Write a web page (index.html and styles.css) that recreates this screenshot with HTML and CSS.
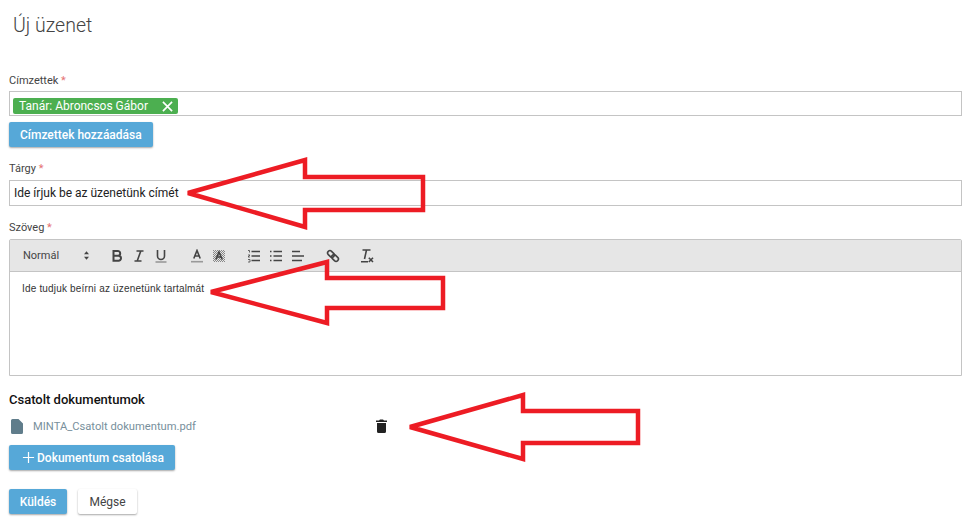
FILE: index.html
```html
<!DOCTYPE html>
<html lang="hu">
<head>
    <meta charset="UTF-8">
    <meta name="viewport" content="width=device-width, initial-scale=1.0">
    <title>Új üzenet</title>
    <link rel="stylesheet" href="styles.css">
</head>
<body>
    <h1 class="page-title">Új üzenet</h1>

    <main class="message-form">
        <!-- Recipients -->
        <div class="field field-recipients">
            <label class="field-label">Címzettek <span class="required">*</span></label>
            <div class="chip-input">
                <span class="chip">Tanár: Abroncsos Gábor
                    <svg class="chip-close" viewBox="0 0 12 12"><path d="M1 1l10 10M11 1L1 11"/></svg>
                </span>
            </div>
            <button class="btn btn-primary btn-recipients">Címzettek hozzáadása</button>
        </div>

        <!-- Subject -->
        <div class="field field-subject">
            <label class="field-label">Tárgy <span class="required">*</span></label>
            <div class="text-input">Ide írjuk be az üzenetünk címét</div>
        </div>

        <!-- Body editor -->
        <div class="field field-body">
            <label class="field-label">Szöveg <span class="required">*</span></label>
            <div class="editor">
                <div class="toolbar">
                    <span class="format-select">Normál
                        <svg class="select-arrows" viewBox="0 0 6 10"><path d="M3 0l3 3.6H0zM3 10L0 6.4h6z"/></svg>
                    </span>
                    <span class="tool-group tool-group-text">
                        <svg class="tool tool-bold" viewBox="0 0 14 14"><path d="M3.500 2h4.300a2.400 2.400 0 0 1 0 4.800H3.500zM3.500 6.800h5a2.500 2.500 0 0 1 0 5h-5z"/></svg>
                        <svg class="tool" viewBox="0 0 14 14"><path d="M4.500 2h7M2.500 12h7M8.800 2L5.200 12"/></svg>
                        <svg class="tool" viewBox="0 0 14 14"><path d="M3.500 1v6a3.500 3.500 0 0 0 7 0V1"/><path class="tool-line" d="M1.500 13h11"/></svg>
                    </span>
                    <span class="tool-group tool-group-color">
                        <svg class="tool" viewBox="0 0 14 14"><path d="M3.800 9.500L7 1.500l3.200 8M5 7h4"/><path class="tool-line" d="M1 12.700h12"/></svg>
                        <svg class="tool" viewBox="0 0 14 14">
                            <defs>
                                <pattern id="dither" width="2" height="2" patternUnits="userSpaceOnUse">
                                    <rect class="tool-hatch" width="1" height="1"/>
                                    <rect class="tool-hatch" x="1" y="1" width="1" height="1"/>
                                </pattern>
                            </defs>
                            <rect class="tool-bg" fill="url(#dither)" x="1" y="1" width="12" height="12"/>
                            <path d="M3.800 10.500L7 3l3.200 7.500M5 8h4"/>
                        </svg>
                    </span>
                    <span class="tool-group tool-group-list">
                        <svg class="tool" viewBox="0 0 14 14"><path d="M4.500 2.500H13M4.500 7H13M4.500 11.500H13"/><path class="tool-thin" d="M1 1.500h1.500v2M1 6h2l-2 2h2M1 10.500h2v2.500H1"/></svg>
                        <svg class="tool" viewBox="0 0 14 14"><path d="M4.500 2.500H13M4.500 7H13M4.500 11.500H13M1 2.500h1.500M1 7h1.500M1 11.500h1.500"/></svg>
                        <svg class="tool" viewBox="0 0 14 14"><path d="M1 2.500h8M1 7h12M1 11.500h10"/></svg>
                    </span>
                    <svg class="tool tool-link" viewBox="0 0 14 14"><rect x="1.200" y="2.700" width="7.500" height="4.600" rx="2.300" transform="rotate(45 5 5)"/><rect x="5.300" y="6.700" width="7.500" height="4.600" rx="2.300" transform="rotate(45 9 9)"/></svg>
                    <svg class="tool tool-clear" viewBox="0 0 14 14"><path d="M2.500 1h8M6.500 1L4.500 10M1 12.700h7"/><path d="M8.800 8.800l4.200 4.200M13 8.800L8.800 13"/></svg>
                </div>
                <div class="editor-content">
                    <p>Ide tudjuk beírni az üzenetünk tartalmát</p>
                </div>
            </div>
        </div>

        <!-- Attachments -->
        <section class="attachments">
            <h2 class="attachments-title">Csatolt dokumentumok</h2>
            <div class="attachment-row">
                <svg class="file-icon" viewBox="0 0 12 15"><path d="M1.500 0H7.500L12 4.500V13.500A1.500 1.500 0 0 1 10.500 15H1.500A1.500 1.500 0 0 1 0 13.500V1.500A1.500 1.500 0 0 1 1.500 0z"/></svg>
                <span class="file-name">MINTA_Csatolt dokumentum.pdf</span>
                <svg class="trash-icon" viewBox="0 0 11 14"><path d="M0 1.500h3L4 .5h3l1 1h3V3H0zM1 4h9v8.500A1.500 1.500 0 0 1 8.500 14h-6A1.500 1.500 0 0 1 1 12.500z"/></svg>
            </div>
            <button class="btn btn-primary btn-attach">
                <svg class="plus-icon" viewBox="0 0 14 14"><path d="M7 1v12M1 7h12"/></svg>
                Dokumentum csatolása
            </button>
        </section>

        <div class="form-actions">
            <button class="btn btn-primary btn-send">Küldés</button>
            <button class="btn btn-default">Mégse</button>
        </div>
    </main>

    <!-- Red arrows drawn over the form -->
    <svg class="arrows" viewBox="0 0 976 523">
        <path d="M188 193L305 160V177H423V210H305V227Z"/>
        <path d="M211 292L327 262V278H443V308H327V323Z"/>
        <path d="M410 427L523 395V411H638V443H523V459Z"/>
    </svg>
</body>
</html>
```

FILE: styles.css
```css
/* Page */
body {
    font-family: Roboto, Arial, sans-serif;
    margin: 0;
    padding: 0;
    background-color: #fff;
    color: #222;
    position: relative;
    height: 523px;
    overflow: hidden;
}

.page-title {
    margin: 0;
    padding: 14px 0 0 13px;
    font-size: 19.500px;
    line-height: 24px;
    font-weight: 300;
    color: #444;
}

.message-form {
    padding: 36px 14px 0 9px;
}

/* Fields */
.field-label {
    display: block;
    font-size: 11px;
    line-height: 14px;
    color: #444;
    margin-bottom: 4px;
}

.field-recipients .field-label {
    margin-bottom: 3px;
}

.required {
    color: #e57373;
}

.chip-input {
    height: 25px;
    border: 1px solid #c4c4c4;
    padding: 3px;
    box-sizing: border-box;
}

.chip {
    display: inline-flex;
    align-items: center;
    justify-content: space-between;
    width: 165px;
    height: 16px;
    padding: 0 5px 0 6px;
    box-sizing: border-box;
    background-color: #4caf50;
    border-radius: 2px;
    color: #fff;
    font-size: 12px;
}

.chip-close {
    width: 11px;
    height: 11px;
    fill: none;
    stroke: #fff;
    stroke-width: 1.800;
}

.btn {
    font-family: inherit;
    font-size: 12px;
    font-weight: 500;
    height: 25px;
    padding: 0 11px;
    border: none;
    border-radius: 2px;
    box-shadow: 0 1px 2px rgba(0, 0, 0, 0.35);
    cursor: pointer;
}

.btn-primary {
    background-color: #56a8d8;
    color: #fff;
}

.btn-default {
    width: 59px;
    padding: 0;
    background-color: #fff;
    color: #444;
    font-weight: 400;
}

.btn-recipients {
    display: block;
    margin-top: 6px;
}

.field-subject {
    margin-top: 15px;
}

.text-input {
    height: 26px;
    line-height: 24px;
    box-sizing: border-box;
    border: 1px solid #c4c4c4;
    padding-left: 4px;
    font-size: 12px;
    color: #222;
}

.field-body {
    margin-top: 15px;
}

/* Editor */
.editor {
    border: 1px solid #c4c4c4;
    border-radius: 2px 2px 0 0;
}

.toolbar {
    display: flex;
    align-items: center;
    height: 31px;
    padding-left: 13px;
    background-color: #e6e6e6;
    border-bottom: 1px solid #c4c4c4;
}

.format-select {
    display: flex;
    align-items: center;
    justify-content: space-between;
    width: 66px;
    font-size: 11px;
    color: #444;
}

.select-arrows {
    width: 5px;
    height: 9px;
    fill: #444;
}

.tool-group {
    display: flex;
    gap: 8px;
}

.tool {
    width: 14px;
    height: 14px;
    fill: none;
    stroke: #444;
    stroke-width: 1.600;
    flex: none;
}

.tool-bold {
    stroke-width: 2;
}

.tool-line {
    stroke: #999;
}

.tool-thin {
    stroke-width: 0.800;
}

.tool-hatch {
    fill: #888;
    stroke: none;
}

.tool-bg {
    stroke: none;
}

.tool-group-text {
    margin-left: 21px;
}

.tool-group-color {
    margin-left: 22px;
}

.tool-group-list {
    margin-left: 21px;
}

.tool-link {
    margin-left: 21px;
}

.tool-clear {
    margin-left: 20px;
}

.editor-content {
    height: 103px;
    padding: 11px 12px;
    box-sizing: border-box;
    font-family: "Liberation Sans", Arial, sans-serif;
    font-size: 10px;
    letter-spacing: 0.180px;
    color: #333;
}

.editor-content p {
    margin: 0;
}

/* Attachments */
.attachments {
    margin-top: 16px;
}

.attachments-title {
    margin: 0;
    font-size: 13px;
    line-height: 16px;
    font-weight: 500;
    color: #111;
}

.attachment-row {
    display: flex;
    align-items: center;
    height: 20px;
    margin-top: 8px;
    padding-left: 2px;
}

.file-icon {
    width: 12px;
    height: 15px;
    fill: #607d8b;
}

.file-name {
    margin-left: 10px;
    width: 343px;
    font-size: 11.200px;
    color: #78909c;
}

.trash-icon {
    width: 11px;
    height: 14px;
    fill: #222;
}

.btn-attach {
    display: flex;
    align-items: center;
    gap: 2px;
    margin-top: 9px;
    padding: 0 11px 0 13px;
}

.plus-icon {
    width: 13px;
    height: 13px;
    fill: none;
    stroke: #fff;
    stroke-width: 1.300;
}

.form-actions {
    display: flex;
    gap: 11px;
    margin-top: 19px;
}

.btn-send {
    width: 58px;
    padding: 0;
}

/* Annotation overlay */
.arrows {
    position: absolute;
    left: 0;
    top: 0;
    width: 976px;
    height: 523px;
    pointer-events: none;
}

.arrows path {
    fill: none;
    stroke: #ed1c24;
    stroke-width: 4.500;
    stroke-linejoin: miter;
    stroke-miterlimit: 3;
}
```
